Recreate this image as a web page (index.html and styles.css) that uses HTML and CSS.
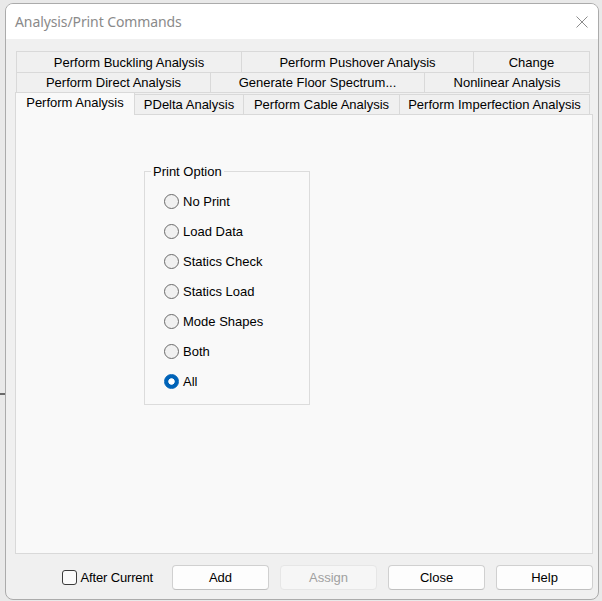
FILE: index.html
```html
<!DOCTYPE html>
<html>
<head>
<meta charset="utf-8">
<link rel="stylesheet" href="styles.css">
</head>
<body>
<div class="bg-mark"></div>
<div class="window">
  <div class="titlebar">
    <span class="title">Analysis/Print Commands</span>
    <svg class="close" width="12" height="12" viewBox="0 0 12 12"><path d="M0.5 0.5L11.5 11.5M11.5 0.5L0.5 11.5" stroke="#8c8c8c" stroke-width="1" fill="none"/></svg>
  </div>
  <div class="body">
    <div class="tabs">
      <div class="row row-a">
        <div class="tab t-buckling">Perform Buckling Analysis</div>
        <div class="tab t-pushover">Perform Pushover Analysis</div>
        <div class="tab t-change">Change</div>
      </div>
      <div class="row row-b">
        <div class="tab t-direct">Perform Direct Analysis</div>
        <div class="tab t-floor">Generate Floor Spectrum...</div>
        <div class="tab t-nonlinear">Nonlinear Analysis</div>
      </div>
      <div class="row row-c">
        <div class="tab tab-front selected t-perform">Perform Analysis</div>
        <div class="tab tab-front t-pdelta">PDelta Analysis</div>
        <div class="tab tab-front t-cable">Perform Cable Analysis</div>
        <div class="tab tab-front t-imperf">Perform Imperfection Analysis</div>
      </div>
    </div>
    <div class="panel">
      <fieldset class="group">
        <legend>Print Option</legend>
        <label class="opt"><span class="radio"></span>No Print</label>
        <label class="opt"><span class="radio"></span>Load Data</label>
        <label class="opt"><span class="radio"></span>Statics Check</label>
        <label class="opt"><span class="radio"></span>Statics Load</label>
        <label class="opt"><span class="radio"></span>Mode Shapes</label>
        <label class="opt"><span class="radio"></span>Both</label>
        <label class="opt"><span class="radio checked"></span>All</label>
      </fieldset>
    </div>
    <div class="footer">
      <label class="check"><span class="box"></span>After Current</label>
      <div class="btn">Add</div>
      <div class="btn disabled">Assign</div>
      <div class="btn">Close</div>
      <div class="btn">Help</div>
    </div>
  </div>
</div>
</body>
</html>
```
FILE: styles.css
```css
html, body {
  margin: 0;
  padding: 0;
}
body {
  background: #e9e9e9;
  width: 602px;
  height: 601px;
  overflow: hidden;
  position: relative;
  font-family: "Liberation Sans", Arial, sans-serif;
  font-size: 13px;
  color: #000;
}
.bg-mark {
  position: absolute;
  left: 0;
  top: 393px;
  width: 5px;
  height: 2px;
  background: #6a6a6a;
}
.window {
  box-sizing: border-box;
  margin: 3px 0 0 5px;
  width: 594px;
  height: 597px;
  border: 1px solid #ababab;
  border-radius: 8px;
  overflow: hidden;
  background: #f0f0f0;
  display: flex;
  flex-direction: column;
}
.titlebar {
  height: 35px;
  flex: none;
  background: #ffffff;
  display: flex;
  align-items: center;
  justify-content: space-between;
  padding: 0 10px 0 9px;
}
.title {
  font-family: "Noto Sans", "Open Sans", sans-serif;
  font-size: 14px;
  color: #8a8a8a;
  letter-spacing: -0.1px;
}
.close {
  display: block;
  margin-top: 1px;
}
.body {
  flex: 1;
  padding: 12px 5px 0 9px;
  display: flex;
  flex-direction: column;
}
.tabs {
  display: flex;
  flex-direction: column;
}
.row {
  display: flex;
}
.row-a {
  margin-left: 1px;
}
.row-b {
  margin-left: 1px;
  margin-top: -1px;
}
.row-c {
  margin-top: -1px;
  align-items: flex-end;
}
.tab {
  box-sizing: border-box;
  border: 1px solid #d9d9d9;
  background: #f0f0f0;
  display: flex;
  align-items: center;
  justify-content: center;
  white-space: nowrap;
  line-height: 15px;
}
.tab + .tab {
  margin-left: -1px;
}
.row-a .tab { height: 22px; }
.row-b .tab { height: 21px; padding-bottom: 1px; }
.tab-front {
  height: 20px;
  border-bottom: none;
}
.tab-front.selected {
  height: 23px;
  margin-bottom: -1px;
  background: #f9f9f9;
  position: relative;
  z-index: 1;
  padding-bottom: 4px;
}
.t-buckling { width: 226px; }
.t-pushover { width: 233px; }
.t-change { width: 117px; }
.t-direct { width: 195px; }
.t-floor { width: 215px; }
.t-nonlinear { width: 166px; }
.t-perform { width: 120px; }
.t-pdelta { width: 110px; }
.t-cable { width: 157px; }
.t-imperf { width: 191px; }

.panel {
  box-sizing: border-box;
  width: 578px;
  height: 440px;
  border: 1px solid #d9d9d9;
  background: #f9f9f9;
  padding: 49px 0 0 128px;
}
.group {
  box-sizing: border-box;
  margin: 0;
  width: 166px;
  border: 1px solid #dcdcdc;
  padding: 7px 0 8px 0;
  display: flex;
  flex-direction: column;
}
.group legend {
  padding: 0 2px;
  margin-left: 6px;
  line-height: 15px;
  font-size: 13px;
}
.opt {
  height: 30px;
  padding-left: 19px;
  display: flex;
  align-items: center;
  white-space: nowrap;
}
.radio {
  box-sizing: border-box;
  width: 15px;
  height: 15px;
  border-radius: 50%;
  border: 1px solid #6b6b6b;
  background: #f0f0f0;
  margin-right: 4px;
  flex: none;
}
.radio.checked {
  border-color: #0063b8;
  background: radial-gradient(circle at center, #ffffff 0, #ffffff 2.8px, #0063b8 3.6px);
}
.footer {
  margin-top: 11px;
  width: 578px;
  display: flex;
  align-items: center;
  justify-content: flex-end;
  gap: 11px;
}
.check {
  display: flex;
  align-items: center;
  margin-right: 8px;
  white-space: nowrap;
  letter-spacing: -0.15px;
}
.box {
  box-sizing: border-box;
  width: 15px;
  height: 15px;
  border: 1px solid #3c3c3c;
  border-radius: 3px;
  background: #fbfbfb;
  margin-right: 4px;
}
.btn {
  box-sizing: border-box;
  width: 97px;
  height: 25px;
  border: 1px solid #d0d0d0;
  border-bottom-color: #c0c0c0;
  border-radius: 4px;
  background: #fdfdfd;
  display: flex;
  align-items: center;
  justify-content: center;
}
.btn.disabled {
  background: #f6f6f6;
  border-color: #e6e6e6;
  color: #a0a0a0;
}
```
